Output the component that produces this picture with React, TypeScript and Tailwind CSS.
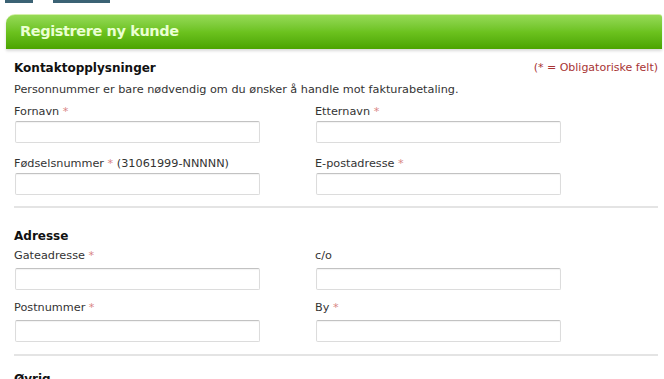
import React from 'react';

type Field = { label: string; required?: boolean; hint?: string };

function FormField({ field, gap }: { field: Field; gap: string }) {
  return (
    <div className="flex flex-col">
      <label className="text-[11.25px] leading-[16px] text-[#333]">
        {field.label}
        {field.required && <span className="text-[#d88585]"> *</span>}
        {field.hint && <span> {field.hint}</span>}
      </label>
      <input
        type="text"
        className={`${gap} ml-[1px] h-[22px] w-[245px] rounded-[2px] border border-[#dcdcdc] border-t-[#c2c2c2] bg-white shadow-[inset_0_1px_1px_rgba(0,0,0,0.05)] outline-none`}
      />
    </div>
  );
}

function FieldGrid({ rows, rowGap, gap }: { rows: Field[][]; rowGap: string; gap: string }) {
  return (
    <div className={`flex flex-col ${rowGap}`}>
      {rows.map((row, i) => (
        <div key={i} className="grid grid-cols-[301px_300px]">
          {row.map((f) => (
            <FormField key={f.label} field={f} gap={gap} />
          ))}
        </div>
      ))}
    </div>
  );
}

export default function App() {
  const contact: Field[][] = [
    [
      { label: 'Fornavn', required: true },
      { label: 'Etternavn', required: true },
    ],
    [
      { label: 'Fødselsnummer', required: true, hint: '(31061999-NNNNN)' },
      { label: 'E-postadresse', required: true },
    ],
  ];
  const address: Field[][] = [
    [
      { label: 'Gateadresse', required: true },
      { label: 'c/o' },
    ],
    [
      { label: 'Postnummer', required: true },
      { label: 'By', required: true },
    ],
  ];

  return (
    <div className="h-[379px] w-[664px] overflow-hidden bg-white font-['DejaVu_Sans','Liberation_Sans',sans-serif] text-[#222]">
      <div className="flex h-[3px] gap-[20px] pl-[5px]">
        <div className="w-[28px] bg-[#3b6274]" />
        <div className="w-[57px] bg-[#3b6274]" />
      </div>

      <div className="ml-[6px] mr-[2px] mt-[11px] flex h-[35px] items-center rounded-tl-[9px] rounded-tr-[3px] border-t border-[#d4f0a8] bg-gradient-to-b from-[#96da55] via-[#6cc21e] to-[#4ba400] pl-[14px] shadow-[0_2px_3px_rgba(0,0,0,0.15)]">
        <h1 className="text-[14.5px] font-bold tracking-[-0.4px] text-[#eaffd2]">Registrere ny kunde</h1>
      </div>

      <div className="pl-[14px] pr-[6px]">
        <div className="mt-[8px] flex items-center justify-between leading-[22px]">
          <h2 className="text-[12px] font-bold text-[#111]">Kontaktopplysninger</h2>
          <span className="text-[11px] text-[#a83434]">(* = Obligatoriske felt)</span>
        </div>
        <p className="text-[11.25px] leading-[22px] text-[#333]">
          Personnummer er bare nødvendig om du ønsker å handle mot fakturabetaling.
        </p>

        <div className="mt-[3px]">
          <FieldGrid rows={contact} rowGap="gap-[13px]" gap="mt-[1px]" />
        </div>

        <hr className="mt-[11px] h-[2px] border-0 bg-[#e4e4e4]" />

        <h2 className="mt-[20px] text-[12px] font-bold leading-[16px] text-[#111]">Adresse</h2>
        <div className="mt-[4px]">
          <FieldGrid rows={address} rowGap="gap-[10px]" gap="mt-[4px]" />
        </div>

        <hr className="mt-[12px] h-[2px] border-0 bg-[#e4e4e4]" />

        <h2 className="mt-[15px] text-[12px] font-bold leading-[16px] text-[#111]">Øvrig</h2>
      </div>
    </div>
  );
}
